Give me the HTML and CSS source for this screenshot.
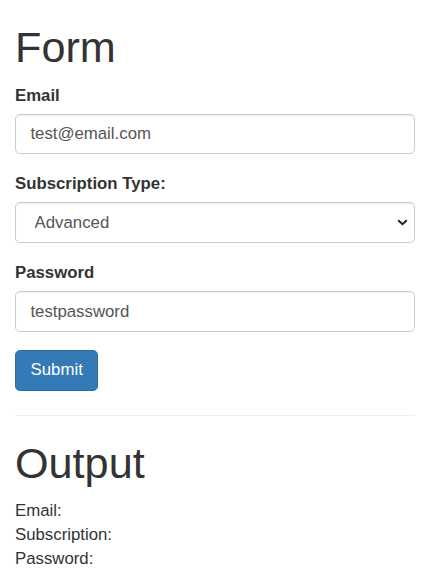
FILE: index.html
```html
<!DOCTYPE html>
<html>
<head>
<meta charset="utf-8">
<link rel="stylesheet" href="styles.css">
</head>
<body>
<div class="container">
  <h1 class="title title-form">Form</h1>
  <form class="form">
    <div class="form-group">
      <label class="label">Email</label>
      <input class="control" type="text" value="test@email.com">
    </div>
    <div class="form-group">
      <label class="label">Subscription Type:</label>
      <div class="select-wrap">
        <select class="control select">
          <option>Basic</option>
          <option selected>Advanced</option>
          <option>Pro</option>
        </select>
        <svg class="chevron" width="11" height="7" viewBox="0 0 11 7"><path d="M1.2 1.2 L5.5 5.2 L9.8 1.2" fill="none" stroke="#222" stroke-width="2"/></svg>
      </div>
    </div>
    <div class="form-group">
      <label class="label">Password</label>
      <input class="control" type="text" value="testpassword">
    </div>
    <button type="button" class="btn">Submit</button>
  </form>
  <hr class="divider">
  <h1 class="title title-output">Output</h1>
  <div class="output">
    <div>Email:</div>
    <div>Subscription:</div>
    <div>Password:</div>
  </div>
</div>
</body>
</html>
```
FILE: styles.css
```css
html, body {
  margin: 0;
  padding: 0;
  background: #fff;
}
body {
  font-family: "Liberation Sans", Arial, sans-serif;
  font-size: 16.8px;
  line-height: 24px;
  color: #333;
}
.container {
  padding: 0 17px 0 15px;
}
.title {
  font-size: 43.2px;
  font-weight: 500;
  line-height: 1.1;
  margin: 24px 0 12px;
}
.form-group {
  margin-bottom: 18px;
}
.label {
  display: block;
  font-weight: bold;
  margin-bottom: 6px;
}
.control {
  display: block;
  box-sizing: border-box;
  width: 100%;
  height: 40.8px;
  padding: 7px 14.4px;
  font-family: inherit;
  font-size: 16.8px;
  color: #555;
  background: #fff;
  border: 1px solid #ccc;
  border-radius: 4.8px;
  box-shadow: inset 0 1px 1px rgba(0,0,0,.075);
  margin: 0;
}
.select-wrap {
  position: relative;
}
.select {
  -webkit-appearance: none;
  appearance: none;
  padding-left: 18.6px;
}
.chevron {
  position: absolute;
  right: 7px;
  top: 17px;
}
.btn {
  display: block;
  box-sizing: border-box;
  height: 40.8px;
  padding: 0 14.6px;
  font-family: inherit;
  font-size: 16.8px;
  color: #fff;
  background: #337ab7;
  border: 1px solid #2e6da4;
  border-radius: 4.8px;
  margin: 0;
}
.divider {
  border: 0;
  border-top: 1px solid #eee;
  margin: 24px 0;
}
```
